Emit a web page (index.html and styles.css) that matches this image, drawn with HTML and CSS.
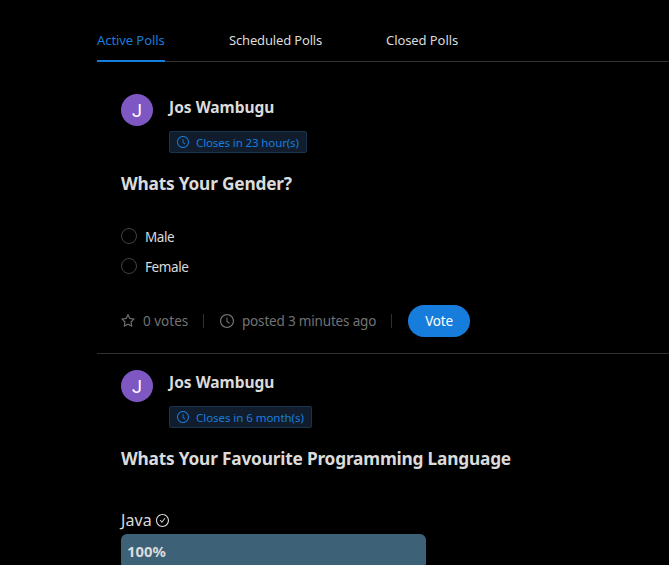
FILE: index.html
```
<!DOCTYPE html>
<html lang="en">
<head>
<meta charset="utf-8">
<title>Polls</title>
<link rel="stylesheet" href="styles.css">
</head>
<body>
<svg width="0" height="0" class="defs">
  <symbol id="clock" viewBox="64 64 896 896"><path d="M512 64C264.6 64 64 264.6 64 512s200.6 448 448 448 448-200.6 448-448S759.4 64 512 64zm0 820c-205.4 0-372-166.6-372-372s166.6-372 372-372 372 166.6 372 372-166.6 372-372 372z"/><path d="M686.7 638.6L544.1 535.5V288c0-4.4-3.6-8-8-8H488c-4.4 0-8 3.6-8 8v275.4c0 2.6 1.2 5 3.3 6.5l165.4 120.6c3.6 2.6 8.6 1.8 11.2-1.7l28.6-39c2.6-3.7 1.8-8.7-1.8-11.2z"/></symbol>
  <symbol id="star" viewBox="64 64 896 896"><path d="M908.1 353.1l-253.9-36.9L540.7 86.1c-3.1-6.3-8.2-11.4-14.5-14.5-15.8-7.8-35-1.3-42.9 14.5L369.8 316.2l-253.9 36.9c-7 1-13.4 4.3-18.3 9.3a32.05 32.05 0 00.6 45.3l183.7 179.1-43.4 252.9a31.95 31.95 0 0046.4 33.7L512 754l227.1 119.4c6.2 3.3 13.4 4.4 20.3 3.2 17.4-3 29.1-19.5 26.1-36.9l-43.4-252.9 183.7-179.1c5-4.9 8.3-11.3 9.3-18.3 2.7-17.5-9.5-33.7-27-36.3zM664.8 561.6l36.1 210.3L512 672.7 323.1 772l36.1-210.3-152.8-149L417.6 382 512 190.7 606.4 382l211.2 30.7-152.8 148.9z"/></symbol>
  <symbol id="check" viewBox="64 64 896 896"><path d="M699 353h-46.9c-10.2 0-19.9 4.9-25.9 13.3L469 584.3l-71.2-98.8c-6-8.3-15.6-13.3-25.9-13.3H325c-6.5 0-10.3 7.4-6.5 12.7l124.6 172.8a31.8 31.8 0 0051.7 0l210.6-292c3.9-5.3.1-12.7-6.4-12.7z"/><path d="M512 64C264.6 64 64 264.6 64 512s200.6 448 448 448 448-200.6 448-448S759.4 64 512 64zm0 820c-205.4 0-372-166.6-372-372s166.6-372 372-372 372 166.6 372 372-166.6 372-372 372z"/></symbol>
</svg>
<main class="polls">
  <nav class="tabs">
    <a class="tab active">Active Polls</a>
    <a class="tab scheduled">Scheduled Polls</a>
    <a class="tab">Closed Polls</a>
  </nav>
  <article class="poll">
    <header class="head">
      <div class="avatar">J</div>
      <div class="author">
        <div class="name">Jos Wambugu</div>
        <div class="tag hours"><svg class="icon"><use href="#clock"/></svg><span>Closes in 23 hour(s)</span></div>
      </div>
    </header>
    <h2 class="title gender">Whats Your Gender?</h2>
    <div class="choices">
      <label class="choice"><i class="radio"></i><span>Male</span></label>
      <label class="choice"><i class="radio"></i><span>Female</span></label>
    </div>
    <footer class="actions">
      <div class="action votes"><svg class="icon"><use href="#star"/></svg><span>0 votes</span></div>
      <div class="action posted"><svg class="icon clock"><use href="#clock"/></svg><span>posted 3 minutes ago</span></div>
      <div class="action"><button class="vote">Vote</button></div>
    </footer>
  </article>
  <article class="poll second">
    <header class="head">
      <div class="avatar">J</div>
      <div class="author">
        <div class="name">Jos Wambugu</div>
        <div class="tag months"><svg class="icon"><use href="#clock"/></svg><span>Closes in 6 month(s)</span></div>
      </div>
    </header>
    <h2 class="title">Whats Your Favourite Programming Language</h2>
    <div class="result">
      <div class="lang"><span>Java</span><svg class="icon"><use href="#check"/></svg></div>
      <div class="bar">100%</div>
    </div>
  </article>
</main>
</body>
</html>
```
FILE: styles.css
```
* { box-sizing: border-box; }
html, body { height: 100%; }
body {
  margin: 0;
  overflow: hidden;
  background: #000;
  color: #dbdbdb;
  font-family: "Noto Sans", "Open Sans", sans-serif;
  font-size: 13.5px;
  white-space: nowrap;
}
.defs { position: absolute; }
.icon { display: block; flex: none; fill: currentColor; }
.polls { margin-left: 97px; height: 565px; overflow: hidden; }
.tabs {
  display: flex;
  gap: 64px;
  height: 62px;
  padding-top: 19px;
  border-bottom: 1px solid #303030;
}
.tab { height: 43px; line-height: 43px; font-size: 13px; letter-spacing: -0.08px; width: 72px; }
.tab.scheduled { width: 93px; letter-spacing: -0.16px; }
.tab.active { width: 68px; color: #177ddc; border-bottom: 2px solid #177ddc; }
.poll { height: 292px; padding: 32px 24px 0; border-bottom: 1px solid #303030; }
.poll.second { height: 211px; padding-top: 16px; border-bottom: 0; }
.head { display: flex; gap: 16px; height: 60px; }
.avatar {
  width: 32px;
  height: 32px;
  border-radius: 50%;
  background: #7e57c2;
  color: #fff;
  font: 18px/33px Roboto, sans-serif;
  text-align: center;
}
.name { height: 28px; line-height: 27px; font-size: 15.5px; font-weight: 700; margin-bottom: 9px; letter-spacing: 0; }
.second .name { margin-bottom: 8px; line-height: 25px; }
.tag {
  display: flex;
  align-items: center;
  gap: 7px;
  width: 138px;
  height: 22px;
  padding-left: 7px;
  border: 1px solid #153450;
  border-radius: 2px;
  background: #111d2c;
  color: #177ddc;
  font-size: 11.5px;
  letter-spacing: -0.12px;
}
.tag.months { width: 143px; letter-spacing: -0.05px; }
.tag .icon { width: 12px; height: 12px; }
.title { margin: 16px 0 0; height: 28px; line-height: 28px; font-size: 17.3px; font-weight: 700; letter-spacing: -0.2px; }
.second .title { margin-top: 15px; }
.choices { margin-top: 24px; }
.choice { display: flex; align-items: center; height: 30px; gap: 8px; letter-spacing: -0.4px; }
.radio { width: 16px; height: 16px; border: 1px solid #434343; border-radius: 50%; margin-top: -2px; }
.actions { display: flex; align-items: center; height: 32px; margin-top: 23px; color: #737373; }
.action { display: flex; align-items: center; }
.action .icon { width: 14px; height: 14px; margin-right: 8px; }
.votes { width: 83px; border-right: 1px solid #303030; height: 14px; }
.posted { width: 188px; height: 14px; padding-left: 16px; border-right: 1px solid #303030; margin-right: 16px; letter-spacing: -0.18px; }
.vote {
  width: 62px;
  height: 32px;
  padding: 0;
  border: 0;
  border-radius: 32px;
  background: #177ddc;
  color: #fff;
  font: inherit;
  letter-spacing: -0.2px;
}
.result { margin-top: 33px; }
.lang { display: flex; align-items: center; gap: 4px; height: 28px; font-size: 16px; letter-spacing: 0.1px; }
.lang .icon { width: 13px; height: 13px; }
.bar {
  width: 305px;
  height: 35px;
  padding-left: 6px;
  border-radius: 6px;
  background: #3d6177;
  font-size: 14.8px;
  font-weight: 700;
  line-height: 35px;
}
```
